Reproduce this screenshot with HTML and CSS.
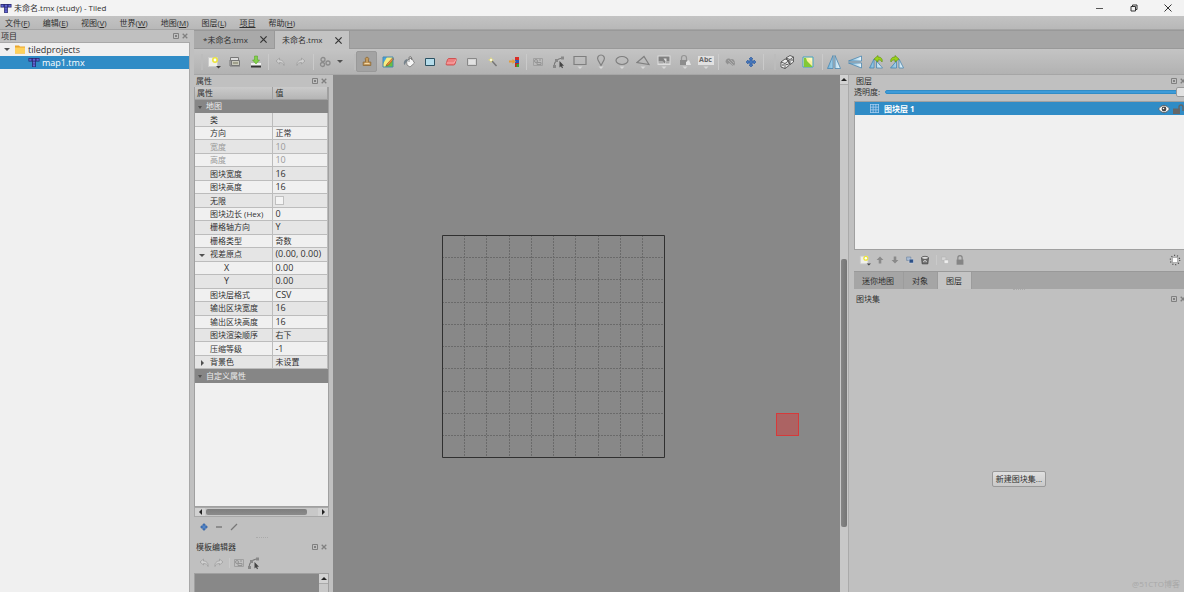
FILE: index.html
```html
<!DOCTYPE html>
<html lang="zh-CN">
<head>
<meta charset="utf-8">
<title>未命名.tmx (study) - Tiled</title>
<link rel="stylesheet" href="styles.css">
</head>
<body>
<svg class="defs" aria-hidden="true">
  <linearGradient id="blue" x1="0" y1="0" x2="1" y2="0"><stop offset="0" stop-color="#6fb3da"/><stop offset="1" stop-color="#eef8fc"/></linearGradient>
  <symbol id="logo" viewBox="0 0 12 12"><path d="M0 1h12v4H8v6H4V5H0z" fill="#25256b"/><path d="M.8 1.800h2.500v2.400H.8zM4.600 1.800h2.800v2.400H4.600zM8.700 1.800h2.500v2.400H8.700zM4.800 5h2.400v2.300H4.800zM4.800 8h2.400v2.300H4.800z" fill="#6064d4"/></symbol>
  <symbol id="folder" viewBox="0 0 12 10"><path d="M1 1h4l1 1h5v7H1z" fill="#e9a52d"/><path d="M1 3h10v6H1z" fill="#ffd15c"/></symbol>
  <symbol id="float" viewBox="0 0 6 6"><path d="M.5.500h5v5h-5z" fill="none" stroke="#808080"/><path d="M2 2h2v2H2z" fill="#808080"/></symbol>
  <symbol id="x" viewBox="0 0 6 6"><path d="M.7.700l4.600 4.600M5.300.700L.7 5.300" stroke="#808080" stroke-width="1.300"/></symbol>
  <symbol id="new" viewBox="0 0 14 14"><path d="M1.500 2.500h9v9h-9z" fill="#f0f0ea" stroke="#ccc"/><circle cx="8" cy="5" r="3" fill="#ece43c"/><circle cx="8" cy="5" r="1.400" fill="#fff"/><path d="M9 11h5l-2.500 2.500z" fill="#444"/></symbol>
  <symbol id="open" viewBox="0 0 14 14"><path d="M2.500 2.500h8v3h-8z" fill="#ddd" stroke="#777"/><path d="M3.500 5.500h8v5h-8z" fill="#c9c9bb" stroke="#777"/><path d="M5 7h5v2H5z" fill="#a0a08c"/><path d="M2 5v6h10" fill="none" stroke="#777"/></symbol>
  <symbol id="save" viewBox="0 0 14 14"><path d="M2 8h10v4H2z" fill="#f1f1f1"/><path d="M2 10.500h10v2H2z" fill="#333"/><path d="M5.500 1h3v4h2L7 9 3.500 5h2z" fill="#84d04c" stroke="#4da11a" stroke-width=".5"/></symbol>
  <symbol id="undo" viewBox="0 0 14 14"><path d="M3 6l3.500-3v2c3 0 5 2 4.500 5.500-.5-2.200-2-3-4.500-3V9z" fill="#d0d0d0" stroke="#999" stroke-width=".7"/></symbol>
  <symbol id="redo" viewBox="0 0 14 14"><path d="M11 6L7.500 3v2c-3 0-5 2-4.500 5.500.5-2.200 2-3 4.500-3V9z" fill="#d0d0d0" stroke="#999" stroke-width=".7"/></symbol>
  <symbol id="gears" viewBox="0 0 14 14"><g fill="none" stroke="#8b8b8b" stroke-width="1.300"><circle cx="5" cy="4.500" r="2"/><circle cx="4.500" cy="9.500" r="2"/><circle cx="10" cy="8" r="2"/></g></symbol>
  <symbol id="stamp" viewBox="0 0 14 14"><path d="M5.500 5a1.800 1.800 0 1 1 3 0v2h2.300v3.500H3.200V7h2.300z" fill="#c59a5c" stroke="#8c6836" stroke-width=".8"/><path d="M4.500 8.500h5" stroke="#f0d7a8"/></symbol>
  <symbol id="terrain" viewBox="0 0 14 14"><path d="M2 2h10v10H2z" fill="#65bf45"/><path d="M2 2h6L2 8z" fill="#47a4df"/><path d="M6 2h6v2L6 9 4 12H2V9z" fill="#f7ed83"/><path d="M6 9l5.500-6 1.500 1-5.500 6-2.500 1z" fill="#ef8a38" stroke="#874a20" stroke-width=".5"/><path d="M2 2h10v10H2z" fill="none" stroke="#4689ad"/></symbol>
  <symbol id="bucket" viewBox="0 0 14 14"><path d="M4.500 5.500l5-2.500 3 5-4.500 4-3-2z" fill="#f6f6f6" stroke="#777" stroke-width=".8"/><path d="M7 7V3c0-2 2.500-2 2.500 0v2" fill="none" stroke="#666" stroke-width=".7"/><path d="M5 4C2 5 1 8 2.500 10 4 9 3 7 6 6z" fill="#77838c"/></symbol>
  <symbol id="rect" viewBox="0 0 14 14"><path d="M2.500 3.500h9v7h-9z" fill="#b5dcea" stroke="#2c5263"/></symbol>
  <symbol id="eraser" viewBox="0 0 14 14"><path d="M5 3.500h6.500q1 0 .8 1L11 9q-.4 1-1.500 1H3q-1 0-.9-1L3.500 4.500Q4 3.500 5 3.500z" fill="#ed7f7f" stroke="#cc4040" stroke-width=".8"/><path d="M2.500 8h7.500l2-3.500" fill="none" stroke="#ffc0c0" stroke-width=".7"/></symbol>
  <symbol id="select" viewBox="0 0 14 14"><path d="M2.500 3.500h9v7h-9z" fill="#d4d4d4" stroke="#888"/><path d="M4 5h6v4H4z" fill="#e2e2e2"/></symbol>
  <symbol id="wand" viewBox="0 0 14 14"><path d="M6 6l4.500 5" stroke="#777" stroke-width="1.500"/><path d="M5 2l.8 2L8 5l-2.200.8L5 8l-.8-2.200L2 5l2.200-1z" fill="#eee46e"/><circle cx="5" cy="5" r="1" fill="#fff"/></symbol>
  <symbol id="same" viewBox="0 0 14 14"><path d="M8 2h4v3H8z" fill="#d92c26"/><path d="M8 5h4v3H8z" fill="#2657bd"/><path d="M8 8h4v4H8z" fill="#c9261c"/><path d="M9.500 9h2.500v3H9.500z" fill="#36a833"/><path d="M2 5.500h3.500V4L9 6.500 5.500 9V7.500H2z" fill="#e49a3b"/></symbol>
  <symbol id="objsel" viewBox="0 0 14 14"><path d="M2.500 3.500h9v7h-9z" fill="none" stroke="#a0a0a0"/><circle cx="5" cy="6" r="1.500" fill="none" stroke="#949494"/><path d="M6 7.500h4v2H6zM8 5h2" fill="none" stroke="#949494"/></symbol>
  <symbol id="poly" viewBox="0 0 14 14"><path d="M2 12c0-5 2-8 8-9" fill="none" stroke="#777" stroke-width="1.200"/><path d="M1 10h3v3H1zM3 4h3v3H3zM9 1.500h3v3H9z" fill="#888"/><path d="M7.500 6v6.500l1.500-1.300 1 2 1-.5-1-2h2z" fill="#444"/></symbol>
  <symbol id="irect" viewBox="0 0 14 16"><path d="M1 2.500h12v8H1z" fill="none" stroke="#7f7f7f" stroke-width="1.200"/><path d="M4.500 12.500h5L7 15z" fill="#d8d8d8"/></symbol>
  <symbol id="ipoint" viewBox="0 0 14 16"><path d="M7 11.500L4 6a3.400 3.400 0 1 1 6 0z" fill="none" stroke="#7f7f7f" stroke-width="1.200"/><path d="M4.500 12.500h5L7 15z" fill="#d8d8d8"/></symbol>
  <symbol id="iell" viewBox="0 0 14 16"><ellipse cx="7" cy="6.500" rx="6" ry="4" fill="none" stroke="#7f7f7f" stroke-width="1.200"/><path d="M4.500 12.500h5L7 15z" fill="#d8d8d8"/></symbol>
  <symbol id="itri" viewBox="0 0 14 16"><path d="M1 8.500l7-6 5 8z" fill="none" stroke="#7f7f7f" stroke-width="1.200"/><path d="M4.500 12.500h5L7 15z" fill="#d8d8d8"/></symbol>
  <symbol id="itile" viewBox="0 0 14 16"><path d="M.5 1.500h13v9.500H.5z" fill="#ddd"/><path d="M1.500 2.500h11v5h-3v-3h-3l2 3-1 2-2-2h-4z" fill="#808080"/><path d="M1.500 7.500h5v2h-5zM8.500 7.500h4v2h-4z" fill="#aaa"/><path d="M4.500 12.500h5L7 15z" fill="#d8d8d8"/></symbol>
  <symbol id="itpl" viewBox="0 0 14 16"><path d="M3.500 6V4a2.500 2.500 0 0 1 5 0v2" fill="none" stroke="#949494" stroke-width="1.200"/><path d="M2 6h7v5H2z" fill="#8c8c8c"/><path d="M8 8l3-2 2 5H8z" fill="#e5e5e5"/><path d="M4.500 12.500h5L7 15z" fill="#d8d8d8"/></symbol>
  <symbol id="itext" viewBox="0 0 16 16"><path d="M0 2h16v9H0z" fill="#e1e1e1"/><path d="M5.500 12.500h5L8 15z" fill="#d8d8d8"/></symbol>
  <symbol id="find" viewBox="0 0 14 14"><path d="M2.500 7q0-3 2.500-3.500 2-.5 2.500 1 1.500-1 3 0Q12 6 12 8.500q0 2-2 2.500L7.500 9 6 8 4.500 9.500z" fill="#929292"/><path d="M5 5l6 6M8 5l3 3" stroke="#b5b5b5" stroke-width=".8"/></symbol>
  <symbol id="move" viewBox="0 0 14 14"><path d="M7 2l2 2H8v2h2V5l2 2-2 2V8H8v2h1l-2 2-2-2h1V8H4v1L2 7l2-2v1h2V4H5z" fill="#4777bb" stroke="#2a579a" stroke-width=".6"/></symbol>
  <symbol id="dice" viewBox="0 0 14 14"><path d="M6 3l4-2.500L13.500 2v5L10 9.500z M1 7l4-3 4 1.500v5L5 13.500 1 12z" fill="#ececec" stroke="#444" stroke-width=".8"/><path d="M1 7l4 1.500L9 5.500M5 8.500v5M6 3l4 1.500 3.500-2.500M10 4.500v5" fill="none" stroke="#444" stroke-width=".8"/><g fill="#333"><circle cx="3" cy="10" r=".8"/><circle cx="7" cy="9.500" r=".8"/><circle cx="12" cy="5" r=".8"/></g></symbol>
  <symbol id="wang" viewBox="0 0 14 14"><path d="M2 2h10v10H2z" fill="#f9f0a0" stroke="#42a1c5"/><path d="M3 3h2l1 3 5 5v1H3z" fill="#82c935"/><path d="M7 3h4v4z" fill="#fff8be"/></symbol>
  <symbol id="fliph" viewBox="0 0 14 14"><path d="M6 .5v13H.5zM8 .5v13h5.500z" fill="url(#blue)" stroke="#4a86b0" stroke-width=".8"/></symbol>
  <symbol id="flipv" viewBox="0 0 14 14"><path d="M13.500 1v5H.5zM13.500 13V8H.5z" fill="url(#blue)" stroke="#4a86b0" stroke-width=".8"/></symbol>
  <symbol id="rotl" viewBox="0 0 14 14"><path d="M5 4v9H.5zM7.500 6v7h6z" fill="url(#blue)" stroke="#4a86b0" stroke-width=".8"/><path d="M5 4l4-3.500V2c3 0 5 2 4 5-1-2-2-2-4-2v2z" fill="#9ad11c" stroke="#5d8c0d" stroke-width=".6"/></symbol>
  <symbol id="rotr" viewBox="0 0 14 14"><path d="M9 4v9h4.500zM6.500 6v7h-6z" fill="url(#blue)" stroke="#4a86b0" stroke-width=".8"/><path d="M9 4L5 .5V2C2 2 0 4 1 7c1-2 2-2 4-2v2z" fill="#9ad11c" stroke="#5d8c0d" stroke-width=".6"/></symbol>
  <symbol id="plus" viewBox="0 0 14 14"><path d="M6 4h2v2h2v2H8v2H6V8H4V6h2z" fill="#5285c7" stroke="#2d5ca0" stroke-width=".7"/></symbol>
  <symbol id="minus" viewBox="0 0 14 14"><path d="M4 6h6v2H4z" fill="#8d8d8d"/></symbol>
  <symbol id="pen" viewBox="0 0 14 14"><path d="M4 10l6-6" stroke="#777" stroke-width="1.300"/></symbol>
  <symbol id="up" viewBox="0 0 14 14"><path d="M7 3l4 4H8.500v4h-3V7H3z" fill="#8a8a8a"/></symbol>
  <symbol id="down" viewBox="0 0 14 14"><path d="M7 11l4-4H8.500V3h-3v4H3z" fill="#8a8a8a"/></symbol>
  <symbol id="dup" viewBox="0 0 14 14"><path d="M3 3.500h5v4H3z" fill="#a8bad1" stroke="#5f7797" stroke-width=".6"/><path d="M6 6h5v4.500H6z" fill="#2b4f85" stroke="#d5e0ee" stroke-width=".6"/></symbol>
  <symbol id="trash" viewBox="0 0 14 14"><path d="M3 4.500h8l-.7 7H3.700z" fill="#777" stroke="#333" stroke-width=".8"/><ellipse cx="7" cy="4.500" rx="4" ry="1.800" fill="#ddd" stroke="#333" stroke-width=".8"/><path d="M5 9l2-1.500L9 9" fill="none" stroke="#eee"/></symbol>
  <symbol id="hl" viewBox="0 0 14 14"><path d="M3 3.500h5v4H3z" fill="#d5d5d5" stroke="#aaa" stroke-width=".5"/><path d="M6 7h5v4H6z" fill="#eee" stroke="#aaa" stroke-width=".5"/></symbol>
  <symbol id="lock" viewBox="0 0 14 14"><path d="M4.500 7V4.500a2.500 2.500 0 0 1 5 0V7" fill="none" stroke="#858585" stroke-width="1.400"/><path d="M3 6.500h8v6H3z" fill="#858585"/></symbol>
  <symbol id="sun" viewBox="0 0 14 14"><circle cx="7" cy="7" r="5.500" fill="none" stroke="#444" stroke-width="1.400" stroke-dasharray="1.200 2.256"/><path d="M4 4h6v6H4z" fill="#fff" stroke="#777" stroke-width=".6"/></symbol>
  <symbol id="grid" viewBox="0 0 10 10"><path d="M.5 0v10M3.500 0v10M6.500 0v10M9.500 0v10M0 .5h10M0 3.500h10M0 6.500h10M0 9.500h10" stroke="#a9cdf0" stroke-width=".9"/></symbol>
  <symbol id="eye" viewBox="0 0 12 10"><path d="M.5 5Q6-2.500 11.500 5 6 12.500.5 5z" fill="#fff" stroke="#444" stroke-width=".8"/><circle cx="6" cy="5" r="2.400" fill="#444"/><circle cx="5.500" cy="4.500" r=".8" fill="#fff"/></symbol>
  <symbol id="unlock" viewBox="0 0 12 10"><path d="M0 4.500h7V10H0z" fill="#666"/><path d="M6 5V3a2 2 0 0 1 4 0v4" fill="none" stroke="#666" stroke-width="1.400"/></symbol>
</svg>

<header class="titlebar">
  <svg class="logo"><use href="#logo"/></svg>
  <span class="window-name">未命名.tmx (study) - Tiled</span>
  <button class="win" aria-label="最小化"><svg viewBox="0 0 8 8"><path d="M0 4.500h7" stroke="#555"/></svg></button>
  <button class="win" aria-label="还原"><svg viewBox="0 0 8 8"><path d="M1 2.500h4.500V7H1zM2.500 2.500V1H7v4.500H5.500" fill="none" stroke="#333"/></svg></button>
  <button class="win" aria-label="关闭"><svg viewBox="0 0 8 8"><path d="M.5.500l7 7M7.500.500l-7 7" stroke="#333"/></svg></button>
</header>
<nav class="menubar">
  <button>文件(<u>F</u>)</button><button>编辑(<u>E</u>)</button><button>视图(<u>V</u>)</button><button>世界(<u>W</u>)</button><button>地图(<u>M</u>)</button><button>图层(<u>L</u>)</button><button><u>项目</u></button><button>帮助(<u>H</u>)</button>
</nav>

<div class="workspace">
  <aside class="project">
    <div class="dock-title"><h2>项目</h2><button aria-label="浮动"><svg><use href="#float"/></svg></button><button aria-label="关闭"><svg><use href="#x"/></svg></button></div>
    <ul class="tree">
      <li><i class="caret"></i><svg class="logo"><use href="#folder"/></svg>tiledprojects</li>
      <li class="child selected"><svg class="logo"><use href="#logo"/></svg>map1.tmx</li>
    </ul>
  </aside>

  <main class="main">
    <div class="filetabs">
      <div class="filetab"><button>*未命名.tmx</button><button class="close" aria-label="关闭"><svg viewBox="0 0 6 6"><path d="M.3.300l5.400 5.400M5.700.300L.3 5.700" stroke="#333"/></svg></button></div>
      <div class="filetab active"><button>未命名.tmx</button><button class="close" aria-label="关闭"><svg viewBox="0 0 6 6"><path d="M.3.300l5.400 5.400M5.700.300L.3 5.700" stroke="#333"/></svg></button></div>
    </div>
    <div class="toolbar">
      <i class="handle first"></i>
      <button aria-label="新建"><svg><use href="#new"/></svg></button><button aria-label="打开"><svg><use href="#open"/></svg></button><button aria-label="保存"><svg><use href="#save"/></svg></button>
      <i class="sep"></i>
      <button aria-label="撤销"><svg><use href="#undo"/></svg></button><button aria-label="重做"><svg><use href="#redo"/></svg></button>
      <i class="sep"></i>
      <button aria-label="命令"><svg><use href="#gears"/></svg></button><button class="drop" aria-label="命令列表"><i class="caret"></i></button>
      <i class="handle"></i>
      <button class="on" aria-label="图章刷"><svg><use href="#stamp"/></svg></button><button aria-label="地形刷"><svg><use href="#terrain"/></svg></button><button aria-label="填充"><svg><use href="#bucket"/></svg></button><button aria-label="形状填充"><svg><use href="#rect"/></svg></button><button aria-label="橡皮"><svg><use href="#eraser"/></svg></button><button aria-label="矩形选择"><svg><use href="#select"/></svg></button><button aria-label="魔棒"><svg><use href="#wand"/></svg></button><button aria-label="选择相同"><svg><use href="#same"/></svg></button>
      <i class="sep"></i>
      <button aria-label="选择对象"><svg><use href="#objsel"/></svg></button><button aria-label="编辑多边形"><svg><use href="#poly"/></svg></button><button aria-label="矩形"><svg class="tall"><use href="#irect"/></svg></button><button aria-label="点"><svg class="tall"><use href="#ipoint"/></svg></button><button aria-label="椭圆"><svg class="tall"><use href="#iell"/></svg></button><button aria-label="多边形"><svg class="tall"><use href="#itri"/></svg></button><button aria-label="图块"><svg class="tall"><use href="#itile"/></svg></button><button aria-label="模板"><svg class="tall"><use href="#itpl"/></svg></button><button class="text-tool"><svg class="tall"><use href="#itext"/></svg><span>Abc</span></button>
      <i class="sep"></i>
      <button aria-label="查找"><svg><use href="#find"/></svg></button><button aria-label="移动"><svg><use href="#move"/></svg></button>
      <i class="sep"></i><i class="handle"></i>
      <button aria-label="随机"><svg><use href="#dice"/></svg></button><button aria-label="地形填充"><svg><use href="#wang"/></svg></button>
      <i class="sep wide"></i>
      <button aria-label="水平翻转"><svg><use href="#fliph"/></svg></button><button aria-label="垂直翻转"><svg><use href="#flipv"/></svg></button><button aria-label="左转"><svg><use href="#rotl"/></svg></button><button aria-label="右转"><svg><use href="#rotr"/></svg></button>
    </div>

    <div class="editor">
      <section class="properties">
        <div class="dock-title"><h2>属性</h2><button aria-label="浮动"><svg><use href="#float"/></svg></button><button aria-label="关闭"><svg><use href="#x"/></svg></button></div>
        <div class="table-pane">
          <table>
            <thead><tr><th>属性</th><th>值</th></tr></thead>
            <tbody>
              <tr class="group"><td colspan="2"><i class="caret"></i>地图</td></tr>
              <tr><td>类</td><td></td></tr>
              <tr><td>方向</td><td>正常</td></tr>
              <tr class="off"><td>宽度</td><td class="num">10</td></tr>
              <tr class="off"><td>高度</td><td class="num">10</td></tr>
              <tr><td>图块宽度</td><td class="num">16</td></tr>
              <tr><td>图块高度</td><td class="num">16</td></tr>
              <tr><td><label for="infinite">无限</label></td><td><input type="checkbox" id="infinite"></td></tr>
              <tr><td>图块边长 (Hex)</td><td class="num">0</td></tr>
              <tr><td>栅格轴方向</td><td class="num">Y</td></tr>
              <tr><td>栅格类型</td><td>奇数</td></tr>
              <tr><td class="parent"><i class="caret"></i>视差原点</td><td class="num">(0.00, 0.00)</td></tr>
              <tr><td class="nested num">X</td><td class="num">0.00</td></tr>
              <tr><td class="nested num">Y</td><td class="num">0.00</td></tr>
              <tr><td>图块层格式</td><td class="num">CSV</td></tr>
              <tr><td>输出区块宽度</td><td class="num">16</td></tr>
              <tr><td>输出区块高度</td><td class="num">16</td></tr>
              <tr><td>图块渲染顺序</td><td>右下</td></tr>
              <tr><td>压缩等级</td><td class="num">-1</td></tr>
              <tr><td class="parent"><i class="caret right"></i>背景色</td><td>未设置</td></tr>
              <tr class="group"><td colspan="2"><i class="caret"></i>自定义属性</td></tr>
            </tbody>
          </table>
        </div>
        <div class="hscroll"><i class="arrow left"></i><i class="track"><i class="thumb"></i></i><i class="arrow right"></i></div>
        <div class="dock-tools"><button aria-label="添加"><svg><use href="#plus"/></svg></button><button aria-label="移除"><svg><use href="#minus"/></svg></button><button aria-label="重命名"><svg><use href="#pen"/></svg></button></div>
        <div class="grip"></div>
        <div class="dock-title"><h2>模板编辑器</h2><button aria-label="浮动"><svg><use href="#float"/></svg></button><button aria-label="关闭"><svg><use href="#x"/></svg></button></div>
        <div class="dock-tools"><button aria-label="撤销"><svg><use href="#undo"/></svg></button><button aria-label="重做"><svg><use href="#redo"/></svg></button><i class="sep"></i><button aria-label="选择对象"><svg><use href="#objsel"/></svg></button><button aria-label="编辑多边形"><svg><use href="#poly"/></svg></button></div>
        <div class="template"><div class="template-view"></div><div class="vscroll"><i class="arrow up"></i></div></div>
      </section>

      <section class="canvas" aria-label="地图">
        <svg class="map" viewBox="0 0 224 224">
          <path d="M22.500 0v223M44.500 0v223M67.500 0v223M89.500 0v223M111.500 0v223M133.500 0v223M156.500 0v223M178.500 0v223M200.500 0v223M0 22.500h223M0 44.500h223M0 67.500h223M0 89.500h223M0 111.500h223M0 133.500h223M0 156.500h223M0 178.500h223M0 200.500h223" stroke="#6a6a6a" stroke-dasharray="2 1"/>
          <path d="M.5.500h222v222H.5z" fill="none" stroke="#303030"/>
        </svg>
        <div class="cursor"></div>
      </section>
      <div class="vscroll main-scroll"><i class="arrow up"></i><i class="thumb"></i></div>

      <aside class="side">
        <div class="dock-title"><h2>图层</h2><button aria-label="浮动"><svg><use href="#float"/></svg></button><button aria-label="关闭"><svg><use href="#x"/></svg></button></div>
        <div class="opacity"><label for="opacity">透明度:</label><input type="range" id="opacity" value="100"></div>
        <ul class="layers">
          <li><svg class="grid-icon"><use href="#grid"/></svg><b>图块层 1</b><button aria-label="可见"><svg><use href="#eye"/></svg></button><button aria-label="锁定"><svg><use href="#unlock"/></svg></button></li>
        </ul>
        <div class="dock-tools layer-tools"><button aria-label="新图层"><svg><use href="#new"/></svg></button><button aria-label="上移"><svg><use href="#up"/></svg></button><button aria-label="下移"><svg><use href="#down"/></svg></button><button aria-label="复制"><svg><use href="#dup"/></svg></button><button aria-label="删除"><svg><use href="#trash"/></svg></button><i class="sep"></i><button aria-label="隐藏其他"><svg><use href="#hl"/></svg></button><button aria-label="锁定其他"><svg><use href="#lock"/></svg></button><button class="end" aria-label="高亮"><svg><use href="#sun"/></svg></button></div>
        <div class="docktabs"><button>迷你地图</button><button>对象</button><button class="active">图层</button></div>
        <div class="grip"></div>
        <div class="dock-title"><h2>图块集</h2><button aria-label="浮动"><svg><use href="#float"/></svg></button><button aria-label="关闭"><svg><use href="#x"/></svg></button></div>
        <div class="tilesets"><button class="push">新建图块集...</button></div>
        <footer>@51CTO博客</footer>
      </aside>
    </div>
  </main>
</div>
</body>
</html>
```
FILE: styles.css
```css
* { box-sizing: border-box; }

body {
  margin: 0;
  height: 100vh;
  display: flex;
  flex-direction: column;
  overflow: hidden;
  background: #c0c0c0;
  color: #303030;
  font: 8px/12px "Open Sans", "Noto Sans CJK SC", sans-serif;
}

button {
  margin: 0;
  padding: 0;
  border: 0;
  background: none;
  color: inherit;
  font: inherit;
  white-space: nowrap;
}

svg { display: block; }
ul { margin: 0; padding: 0; list-style: none; }
h2 { margin: 0; font: inherit; }
.defs { position: absolute; width: 0; height: 0; }
.logo { width: 12px; height: 11px; flex: none; }

.titlebar {
  display: flex;
  align-items: center;
  gap: 2px;
  height: 16px;
  flex: none;
  background: #f3f3f3;
}
.window-name { flex: 1; font-size: 8px; }
.win { width: 32px; display: flex; justify-content: center; }
.win svg { width: 8px; height: 8px; }

.menubar {
  display: flex;
  gap: 13px;
  height: 14px;
  flex: none;
  padding: 0 5px;
  background: linear-gradient(#c3c3c3, #b8b8b8);
  border-bottom: 1px solid #a4a4a4;
}
.menubar u { text-underline-offset: 1px; }

.workspace { flex: 1; display: flex; gap: 4px; min-height: 0; }

.dock-title {
  display: flex;
  align-items: center;
  gap: 3px;
  height: 12px;
  flex: none;
  padding: 0 2px 0 1px;
}
.dock-title h2 { flex: 1; }
.dock-title svg { width: 6px; height: 6px; }

.project { width: 190px; flex: none; display: flex; flex-direction: column; }
.tree { flex: 1; background: #f0f0f0; border: solid #a8a8a8; border-width: 1px 1px 0 0; font-size: 9px; }
.tree li { display: flex; align-items: center; gap: 2px; height: 13px; padding-left: 4px; }
.tree .logo { margin-left: 2px; }
.tree .child { padding-left: 26px; }
.selected { background: #308cc6; color: #fff; }

.caret { width: 0; height: 0; flex: none; border: solid transparent; border-width: 3px 3px 0; border-top-color: #505050; }
.caret.right { border-width: 3px 0 3px 3px; border-color: transparent transparent transparent #505050; }

.main { flex: 1; min-width: 0; display: flex; flex-direction: column; }

.filetabs { display: flex; height: 19px; flex: none; background: #a5a5a5; border-top: 1px solid #999; border-bottom: 1px solid #999; }
.filetab { display: flex; align-items: center; gap: 12px; padding: 0 7px 0 9px; background: #a9a9a9; border-right: 1px solid #999; }
.filetab.active { margin-bottom: -1px; padding-left: 7px; background: #c3c3c3; }
.close svg { width: 7px; height: 7px; }

.toolbar { display: flex; align-items: center; height: 26px; flex: none; background: linear-gradient(#c4c4c4, #b2b2b2); border-bottom: 1px solid #a6a6a6; }
.toolbar button { width: 21px; height: 21px; flex: none; display: flex; align-items: center; justify-content: center; position: relative; }
.toolbar svg { width: 14px; height: 14px; }
.toolbar .tall { height: 16px; }
.toolbar .drop { width: 9px; }
.toolbar .on { background: #a3a3a3; border: 1px solid #999; border-radius: 2px; }
.text-tool .tall { width: 16px; }
.text-tool span { position: absolute; inset: 3px 0 auto; font-size: 7px; font-weight: 700; line-height: 12px; color: #666; }
.sep { width: 3px; height: 16px; flex: none; border-right: 1px solid #cacaca; }
.sep.wide { width: 5px; }
.handle { width: 12px; height: 16px; flex: none; border-right: 2px solid #bcbcbc; }
.handle.first { width: 9px; }

.editor { flex: 1; display: flex; min-height: 0; }

.properties { width: 139px; flex: none; display: flex; flex-direction: column; padding-right: 4px; }
.properties .dock-title { padding-left: 2px; }
.table-pane { flex: 1; min-height: 0; background: #f0f0f0; border: 1px solid #a0a0a0; border-top: 0; }
table { width: 100%; height: 296px; border-collapse: separate; border-spacing: 0; table-layout: fixed; }
th, td { padding: 0 0 0 2px; border-right: 1px solid #bcbcbc; border-bottom: 1px solid #bcbcbc; line-height: 12px; text-align: left; font-weight: 400; white-space: nowrap; }
th:first-child { width: 59%; }
th { background: linear-gradient(#cbcbcb, #b5b5b5); border-color: #a0a0a0; }
td:first-child { padding-left: 15px; }
tbody tr:nth-child(even) { background: #e5e5e5; }
.num { font-size: 9px; }
.off { color: #9a9a9a; }
td.nested { padding-left: 29px; }
tbody .group { background: #868686; color: #ececec; }
.group td { border-color: #868686; }
.group td:first-child { padding-left: 3px; }
.group .caret { display: inline-block; margin-right: 4px; vertical-align: middle; border-width: 3px 2px 0; }
td.parent:first-child { padding-left: 4px; }
.parent .caret { display: inline-block; margin-right: 5px; vertical-align: middle; }
.parent .caret.right { margin: 0 6px 0 2px; }
td input { appearance: none; display: block; width: 9px; height: 9px; margin: 0; background: #f4f4f4; border: 1px solid #c0c0c0; }

.hscroll { display: flex; height: 10px; flex: none; background: #d2d2d2; border: 1px solid #a8a8a8; }
.arrow { width: 10px; height: 8px; flex: none; display: grid; place-items: center; }
.arrow::before { content: ""; border: 3px solid transparent; }
.arrow.left::before { border-right-color: #222; border-left-width: 0; }
.arrow.right::before { border-left-color: #222; border-right-width: 0; }
.arrow.up::before { border-bottom-color: #222; border-top-width: 0; }
.track { flex: 1; background: #c8c8c8; }
.hscroll .thumb { display: block; width: 89%; height: 6px; margin: 1px; background: linear-gradient(#7e7e7e, #8b8b8b); border-radius: 2px; }

.dock-tools { display: flex; align-items: center; height: 20px; flex: none; padding-left: 3px; }
.dock-tools button { width: 15px; }
.dock-tools svg { width: 14px; height: 14px; }
.dock-tools .sep { height: 10px; margin-right: 2px; }
.dock-tools .end { margin-left: auto; }
.grip { width: 12px; height: 4px; flex: none; margin: 0 auto; border-top: 1px dotted #aaa; }
.template { display: flex; height: 19px; flex: none; border: 1px solid #a0a0a0; border-bottom: 0; }
.template-view { flex: 1; background: #888; }
.vscroll { width: 9px; flex: none; display: flex; flex-direction: column; background: #c8c8c8; }
.vscroll .arrow { width: 100%; height: 10px; background: #d2d2d2; border-bottom: 1px solid #aaa; }

.canvas { flex: 1; min-width: 0; position: relative; overflow: hidden; background: #888; }
.map { position: absolute; left: 109px; top: 160px; width: 224px; height: 224px; }
.cursor { position: absolute; left: 443px; top: 338px; width: 23px; height: 23px; background: #ac6363; border: 1px solid #d63a3a; }

.main-scroll { border-right: 1px solid #aaa; }
.main-scroll .thumb { flex: 0 0 268px; margin: 174px 1px 0 1px; background: linear-gradient(90deg, #858585, #757575); border-radius: 2px; }

.side { width: 335px; flex: none; display: flex; flex-direction: column; padding-left: 5px; overflow: hidden; }
.side .dock-title { padding: 0 0 0 2px; margin-right: -2px; }
.opacity { display: flex; align-items: center; height: 10px; flex: none; }
.opacity label { width: 31px; flex: none; }
.opacity input { appearance: none; flex: 1; height: 10px; margin: 0 -7px 0 0; background: none; }
.opacity input::-webkit-slider-runnable-track { height: 4px; background: #3d9bd9; border: 1px solid #308cc6; border-radius: 2px; }
.opacity input::-webkit-slider-thumb { appearance: none; width: 14px; height: 10px; margin-top: -4px; background: #e2e2e2; border: 1px solid #999; border-radius: 2px; }
.layers { height: 149px; flex: none; margin-top: 4px; background: #f0f0f0; border: 1px solid #a0a0a0; border-right: 0; }
.layers li { display: flex; align-items: center; height: 13px; margin-right: -4px; padding-left: 15px; background: #308cc6; color: #fff; }
.layers b { flex: 1; margin-left: 5px; }
.layers button { width: 15px; }
.layers button svg { width: 12px; height: 10px; }
.grid-icon { width: 9px; height: 9px; }
.layer-tools { padding-left: 5px; }
.layer-tools svg { width: 12px; height: 12px; }
.docktabs { display: flex; height: 18px; flex: none; margin-top: 1px; background: #a5a5a5; border-top: 1px solid #999; }
.docktabs button { padding: 0 9px 0 8px; border-right: 1px solid #9c9c9c; }
.docktabs .active { background: #c4c4c4; }
.tilesets { flex: 1; display: grid; place-items: center; padding-top: 74px; }
.push { height: 16px; padding: 0 3px; background: linear-gradient(#e0e0e0, #c9c9c9); border: 1px solid #999; border-radius: 2px; }
.side footer { height: 14px; padding-right: 4px; flex: none; text-align: right; color: #a8a8a8; }
```
